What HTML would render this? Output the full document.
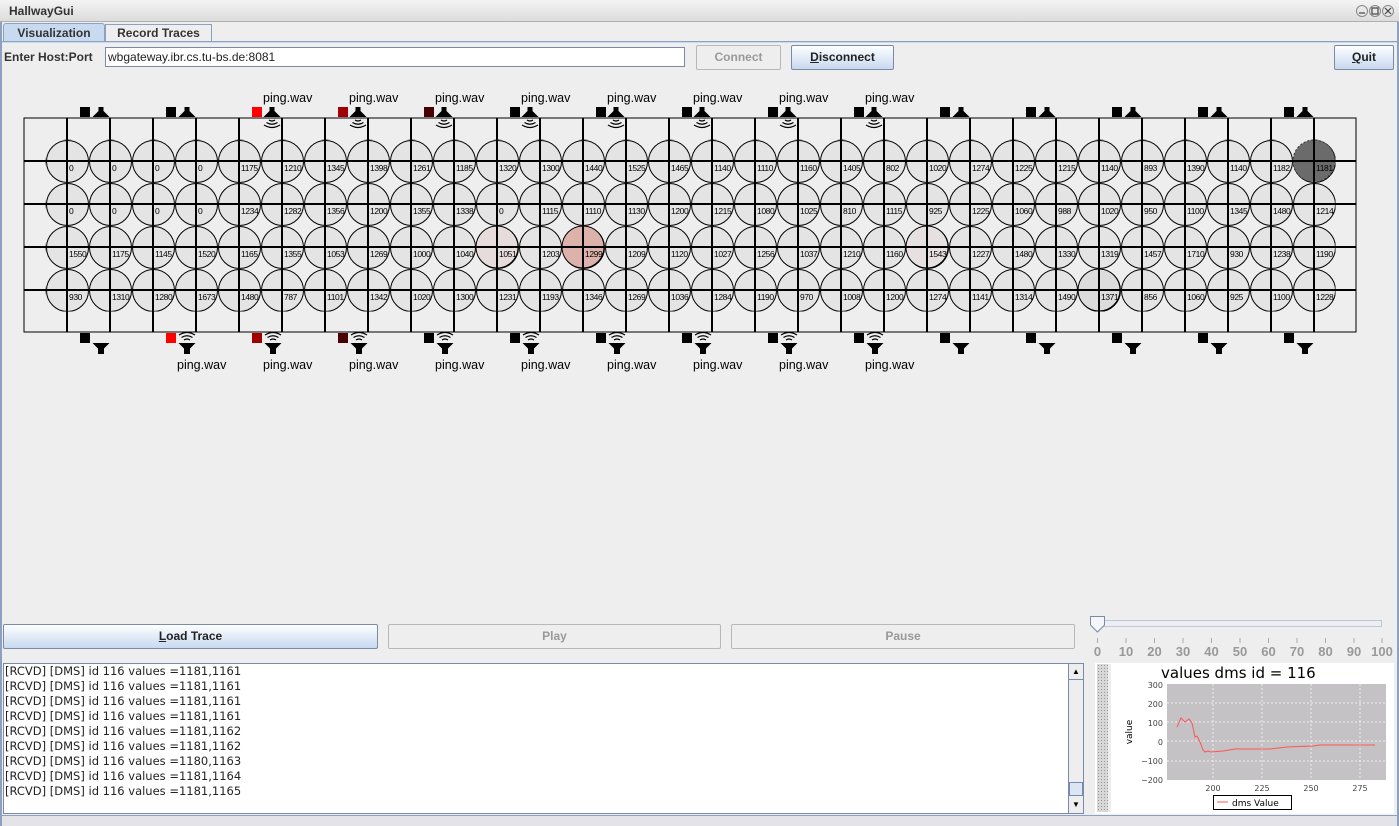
<!DOCTYPE html>
<html><head><meta charset="utf-8"><style>
*{margin:0;padding:0;box-sizing:border-box}
body{width:1399px;height:826px;background:#eeeeee;font-family:"Liberation Sans","DejaVu Sans",sans-serif;position:relative;overflow:hidden}
.a{position:absolute}
.btn{position:absolute;border:1px solid #7a8aa8;background:linear-gradient(#fdfeff,#dde8f6 60%,#c9d9ee);font-weight:bold;font-size:12px;text-align:center;color:#222;border-radius:2px}
.dis{border:1px solid #b8b8b8;background:#eeeeee;color:#999}
.log{font-family:"DejaVu Sans","Liberation Sans",sans-serif;font-size:11.5px;line-height:15px;color:#222}
</style></head><body>
<!-- title bar -->
<div class="a" style="left:0;top:0;width:1399px;height:22px;background:linear-gradient(#f4f4f4,#dcdcdc);border-bottom:1px solid #b0b0b0"></div>
<div class="a" style="left:9px;top:4px;font-size:12px;font-weight:bold;color:#333">HallwayGui</div>
<svg class="a" style="left:1355px;top:4px" width="44" height="14"><g fill="#e8e8e8" stroke="#888"><circle cx="7" cy="7" r="5.5"/><circle cx="20" cy="7" r="5.5"/><circle cx="33" cy="7" r="5.5"/></g><g stroke="#444" stroke-width="1.2"><line x1="4" y1="9" x2="10" y2="9"/><rect x="17" y="4" width="6" height="6" fill="none"/><line x1="30" y1="4" x2="36" y2="10"/><line x1="36" y1="4" x2="30" y2="10"/></g></svg>
<div class="a" style="left:0;top:22px;width:2px;height:804px;background:#8da0c0"></div>
<div class="a" style="left:1397px;top:22px;width:2px;height:804px;background:#8da0c0"></div>
<!-- tabs -->
<div class="a" style="left:3px;top:23px;width:102px;height:19px;background:#c8daf0;border:1px solid #8da0c0;border-bottom:none;border-radius:3px 3px 0 0;font-size:12px;font-weight:bold;color:#333;text-align:center;line-height:18px">Visualization</div>
<div class="a" style="left:105px;top:24px;width:107px;height:17px;background:#eeeeee;border:1px solid #8da0c0;border-bottom:none;font-size:12px;font-weight:bold;color:#333;text-align:center;line-height:17px">Record Traces</div>
<div class="a" style="left:2px;top:41px;width:1395px;height:2px;background:#c8daf0;border-top:1px solid #8da0c0"></div>
<!-- host row -->
<div class="a" style="left:4px;top:50px;font-size:12px;font-weight:bold;color:#333">Enter Host:Port</div>
<div class="a" style="left:105px;top:47px;width:580px;height:20px;background:#fff;border:1px solid #7a8aa8;font-size:12px;line-height:18px;padding-left:2px;color:#222">wbgateway.ibr.cs.tu-bs.de:8081</div>
<div class="btn dis" style="left:696px;top:45px;width:85px;height:25px;line-height:23px">Connect</div>
<div class="btn" style="left:791px;top:45px;width:103px;height:25px;line-height:23px"><u>D</u>isconnect</div>
<div class="btn" style="left:1334px;top:45px;width:60px;height:25px;line-height:23px"><u>Q</u>uit</div>
<!-- grid -->
<svg class="a" style="left:0;top:0" width="1399" height="380" font-family="Liberation Sans, sans-serif">
<defs><pattern id="c" x="46" y="140" width="43" height="43" patternUnits="userSpaceOnUse"><circle cx="21.5" cy="21.5" r="21" fill="#e4e4e4" stroke="#000" stroke-width="1"/></pattern>
<g id="st"><rect x="-2.5" y="0" width="5" height="5"/><path d="M-2.5 4 L2.5 4 L8.5 10 L-8.5 10Z"/></g>
<g id="sb"><path d="M-8.5 0 L8.5 0 L2.5 6 L-2.5 6Z"/><rect x="-3" y="5" width="6" height="6"/></g>
<g id="wt" fill="none" stroke="#000" stroke-width="1.2"><path d="M-3 2 Q0 4 3 2"/><path d="M-5.5 4.5 Q0 8 5.5 4.5"/><path d="M-8 7 Q0 12 8 7"/></g>
<g id="wb" fill="none" stroke="#000" stroke-width="1.2"><path d="M-3 7 Q0 5 3 7"/><path d="M-5.5 4.5 Q0 1 5.5 4.5"/><path d="M-8 2 Q0 -3 8 2"/></g></defs>
<rect x="24" y="118" width="1332" height="214" fill="#eeeeee" stroke="#000" stroke-width="1"/>
<rect x="45.5" y="139.5" width="1290" height="172" fill="url(#c)"/>
<circle cx="1314" cy="161" r="21" fill="#6b6b6b" stroke="#333" stroke-dasharray="2 2"/>
<circle cx="583" cy="247" r="21" fill="#dcb2ab" stroke="#000"/>
<circle cx="497" cy="247" r="21" fill="#e6dcdc" stroke="#000"/>
<circle cx="927" cy="247" r="21" fill="#e6e0e0" stroke="#000"/>
<circle cx="1099" cy="290" r="21" fill="#dcdcdc" stroke="#000"/>
<g stroke="#000" stroke-width="2">
<path d="M67 118V332M110 118V332M153 118V332M196 118V332M239 118V332M282 118V332M325 118V332M368 118V332M411 118V332M454 118V332M497 118V332M540 118V332M583 118V332M626 118V332M669 118V332M712 118V332M755 118V332M798 118V332M841 118V332M884 118V332M927 118V332M970 118V332M1013 118V332M1056 118V332M1099 118V332M1142 118V332M1185 118V332M1228 118V332M1271 118V332M1314 118V332"/>
<path d="M24 161H1356M24 204H1356M24 247H1356M24 290H1356"/>
</g>
<g font-size="8.5" letter-spacing="-0.4" fill="#000">
<text y="171"><tspan x="69">0</tspan><tspan x="112">0</tspan><tspan x="155">0</tspan><tspan x="198">0</tspan><tspan x="241">1175</tspan><tspan x="284">1210</tspan><tspan x="327">1345</tspan><tspan x="370">1398</tspan><tspan x="413">1261</tspan><tspan x="456">1185</tspan><tspan x="499">1320</tspan><tspan x="542">1300</tspan><tspan x="585">1440</tspan><tspan x="628">1525</tspan><tspan x="671">1465</tspan><tspan x="714">1140</tspan><tspan x="757">1110</tspan><tspan x="800">1160</tspan><tspan x="843">1405</tspan><tspan x="886">802</tspan><tspan x="929">1020</tspan><tspan x="972">1274</tspan><tspan x="1015">1225</tspan><tspan x="1058">1215</tspan><tspan x="1101">1140</tspan><tspan x="1144">893</tspan><tspan x="1187">1390</tspan><tspan x="1230">1140</tspan><tspan x="1273">1182</tspan><tspan x="1316">1181</tspan></text>
<text y="214"><tspan x="69">0</tspan><tspan x="112">0</tspan><tspan x="155">0</tspan><tspan x="198">0</tspan><tspan x="241">1234</tspan><tspan x="284">1282</tspan><tspan x="327">1356</tspan><tspan x="370">1200</tspan><tspan x="413">1355</tspan><tspan x="456">1338</tspan><tspan x="499">0</tspan><tspan x="542">1115</tspan><tspan x="585">1110</tspan><tspan x="628">1130</tspan><tspan x="671">1200</tspan><tspan x="714">1215</tspan><tspan x="757">1080</tspan><tspan x="800">1025</tspan><tspan x="843">810</tspan><tspan x="886">1115</tspan><tspan x="929">925</tspan><tspan x="972">1225</tspan><tspan x="1015">1060</tspan><tspan x="1058">988</tspan><tspan x="1101">1020</tspan><tspan x="1144">950</tspan><tspan x="1187">1100</tspan><tspan x="1230">1345</tspan><tspan x="1273">1480</tspan><tspan x="1316">1214</tspan></text>
<text y="257"><tspan x="69">1550</tspan><tspan x="112">1175</tspan><tspan x="155">1145</tspan><tspan x="198">1520</tspan><tspan x="241">1165</tspan><tspan x="284">1355</tspan><tspan x="327">1053</tspan><tspan x="370">1269</tspan><tspan x="413">1000</tspan><tspan x="456">1040</tspan><tspan x="499">1051</tspan><tspan x="542">1203</tspan><tspan x="585">1299</tspan><tspan x="628">1209</tspan><tspan x="671">1120</tspan><tspan x="714">1027</tspan><tspan x="757">1256</tspan><tspan x="800">1037</tspan><tspan x="843">1210</tspan><tspan x="886">1160</tspan><tspan x="929">1543</tspan><tspan x="972">1227</tspan><tspan x="1015">1480</tspan><tspan x="1058">1330</tspan><tspan x="1101">1319</tspan><tspan x="1144">1457</tspan><tspan x="1187">1710</tspan><tspan x="1230">930</tspan><tspan x="1273">1238</tspan><tspan x="1316">1190</tspan></text>
<text y="300"><tspan x="69">930</tspan><tspan x="112">1310</tspan><tspan x="155">1280</tspan><tspan x="198">1673</tspan><tspan x="241">1480</tspan><tspan x="284">787</tspan><tspan x="327">1101</tspan><tspan x="370">1342</tspan><tspan x="413">1020</tspan><tspan x="456">1300</tspan><tspan x="499">1231</tspan><tspan x="542">1193</tspan><tspan x="585">1346</tspan><tspan x="628">1269</tspan><tspan x="671">1036</tspan><tspan x="714">1284</tspan><tspan x="757">1190</tspan><tspan x="800">970</tspan><tspan x="843">1008</tspan><tspan x="886">1200</tspan><tspan x="929">1274</tspan><tspan x="972">1141</tspan><tspan x="1015">1314</tspan><tspan x="1058">1490</tspan><tspan x="1101">1371</tspan><tspan x="1144">856</tspan><tspan x="1187">1060</tspan><tspan x="1230">925</tspan><tspan x="1273">1100</tspan><tspan x="1316">1228</tspan></text>
</g>
<!-- top devices -->
<g fill="#000">
<rect x="80" y="107" width="10" height="10"/><use href="#st" x="101" y="107"/>
<rect x="166" y="107" width="10" height="10"/><use href="#st" x="187" y="107"/>
<rect x="252" y="107" width="10" height="10" fill="#ff0000"/><use href="#st" x="272" y="107"/><use href="#wt" x="272" y="118"/>
<rect x="338" y="107" width="10" height="10" fill="#a00000"/><use href="#st" x="358" y="107"/><use href="#wt" x="358" y="118"/>
<rect x="424" y="107" width="10" height="10" fill="#4a0000"/><use href="#st" x="444" y="107"/><use href="#wt" x="444" y="118"/>
<rect x="510" y="107" width="10" height="10"/><use href="#st" x="530" y="107"/><use href="#wt" x="530" y="118"/>
<rect x="596" y="107" width="10" height="10"/><use href="#st" x="616" y="107"/><use href="#wt" x="616" y="118"/>
<rect x="682" y="107" width="10" height="10"/><use href="#st" x="702" y="107"/><use href="#wt" x="702" y="118"/>
<rect x="768" y="107" width="10" height="10"/><use href="#st" x="788" y="107"/><use href="#wt" x="788" y="118"/>
<rect x="854" y="107" width="10" height="10"/><use href="#st" x="874" y="107"/><use href="#wt" x="874" y="118"/>
<rect x="940" y="107" width="10" height="10"/><use href="#st" x="961" y="107"/>
<rect x="1026" y="107" width="10" height="10"/><use href="#st" x="1047" y="107"/>
<rect x="1112" y="107" width="10" height="10"/><use href="#st" x="1133" y="107"/>
<rect x="1198" y="107" width="10" height="10"/><use href="#st" x="1219" y="107"/>
<rect x="1284" y="107" width="10" height="10"/><use href="#st" x="1305" y="107"/>
</g>
<g font-size="12.5" fill="#000"><text y="102"><tspan x="263">ping.wav</tspan><tspan x="349">ping.wav</tspan><tspan x="435">ping.wav</tspan><tspan x="521">ping.wav</tspan><tspan x="607">ping.wav</tspan><tspan x="693">ping.wav</tspan><tspan x="779">ping.wav</tspan><tspan x="865">ping.wav</tspan></text>
<text y="369"><tspan x="177">ping.wav</tspan><tspan x="263">ping.wav</tspan><tspan x="349">ping.wav</tspan><tspan x="435">ping.wav</tspan><tspan x="521">ping.wav</tspan><tspan x="607">ping.wav</tspan><tspan x="693">ping.wav</tspan><tspan x="779">ping.wav</tspan><tspan x="865">ping.wav</tspan></text></g>
<!-- bottom devices -->
<g fill="#000">
<rect x="80" y="333" width="10" height="10"/><use href="#sb" x="101" y="343"/>
<rect x="166" y="333" width="10" height="10" fill="#ff0000"/><use href="#sb" x="187" y="343"/><use href="#wb" x="187" y="333"/>
<rect x="252" y="333" width="10" height="10" fill="#a00000"/><use href="#sb" x="273" y="343"/><use href="#wb" x="273" y="333"/>
<rect x="338" y="333" width="10" height="10" fill="#4a0000"/><use href="#sb" x="359" y="343"/><use href="#wb" x="359" y="333"/>
<rect x="424" y="333" width="10" height="10"/><use href="#sb" x="445" y="343"/><use href="#wb" x="445" y="333"/>
<rect x="510" y="333" width="10" height="10"/><use href="#sb" x="531" y="343"/><use href="#wb" x="531" y="333"/>
<rect x="596" y="333" width="10" height="10"/><use href="#sb" x="617" y="343"/><use href="#wb" x="617" y="333"/>
<rect x="682" y="333" width="10" height="10"/><use href="#sb" x="703" y="343"/><use href="#wb" x="703" y="333"/>
<rect x="768" y="333" width="10" height="10"/><use href="#sb" x="789" y="343"/><use href="#wb" x="789" y="333"/>
<rect x="854" y="333" width="10" height="10"/><use href="#sb" x="875" y="343"/><use href="#wb" x="875" y="333"/>
<rect x="940" y="333" width="10" height="10"/><use href="#sb" x="961" y="343"/>
<rect x="1026" y="333" width="10" height="10"/><use href="#sb" x="1047" y="343"/>
<rect x="1112" y="333" width="10" height="10"/><use href="#sb" x="1133" y="343"/>
<rect x="1198" y="333" width="10" height="10"/><use href="#sb" x="1219" y="343"/>
<rect x="1284" y="333" width="10" height="10"/><use href="#sb" x="1305" y="343"/>
</g>
</svg>
<!-- bottom buttons -->
<div class="btn" style="left:3px;top:624px;width:375px;height:25px;line-height:23px"><u>L</u>oad Trace</div>
<div class="btn dis" style="left:388px;top:624px;width:333px;height:25px;line-height:23px">Play</div>
<div class="btn dis" style="left:731px;top:624px;width:344px;height:25px;line-height:23px">Pause</div>
<!-- slider -->
<svg class="a" style="left:1085px;top:612px" width="312" height="50" font-family="Liberation Sans, sans-serif">
<rect x="12.5" y="8.5" width="284" height="6" fill="#eeeeee" stroke="#b8c8e0"/>
<path d="M5.5 4.5 H19.5 V13 L12.5 20 L5.5 13Z" fill="#f4f6fa" stroke="#7a8aa8"/>
<g stroke="#aaa"><path d="M12.5 26V31M41 26V31M69.5 26V31M98 26V31M126.5 26V31M155 26V31M183.5 26V31M212 26V31M240.5 26V31M269 26V31M297 26V31"/></g>
<g font-size="13" font-weight="bold" fill="#999" text-anchor="middle"><text y="44"><tspan x="12.5">0</tspan><tspan x="41">10</tspan><tspan x="69.5">20</tspan><tspan x="98">30</tspan><tspan x="126.5">40</tspan><tspan x="155">50</tspan><tspan x="183.5">60</tspan><tspan x="212">70</tspan><tspan x="240.5">80</tspan><tspan x="269">90</tspan><tspan x="297">100</tspan></text></g>
</svg>
<!-- log -->
<div class="a" style="left:3px;top:663px;width:1081px;height:151px;background:#fff;border:1px solid #7a8aa8"></div>
<div class="a log" style="left:5px;top:664px">[RCVD] [DMS] id 116 values =1181,1161<br>[RCVD] [DMS] id 116 values =1181,1161<br>[RCVD] [DMS] id 116 values =1181,1161<br>[RCVD] [DMS] id 116 values =1181,1161<br>[RCVD] [DMS] id 116 values =1181,1162<br>[RCVD] [DMS] id 116 values =1181,1162<br>[RCVD] [DMS] id 116 values =1180,1163<br>[RCVD] [DMS] id 116 values =1181,1164<br>[RCVD] [DMS] id 116 values =1181,1165</div>
<div class="a" style="left:1068px;top:663px;width:16px;height:151px;background:#eeeeee;border:1px solid #7a8aa8"></div>
<div class="a" style="left:1069px;top:664px;width:14px;height:16px;border-bottom:1px solid #7a8aa8;font-size:8px;text-align:center;line-height:16px">▲</div>
<div class="a" style="left:1069px;top:782px;width:14px;height:14px;background:#dbe6f5;border:1px solid #7a8aa8"></div>
<div class="a" style="left:1069px;top:796px;width:14px;height:17px;font-size:8px;text-align:center;line-height:17px">▼</div>
<!-- chart -->
<div class="a" style="left:1095px;top:663px;width:299px;height:151px;background:#fff"></div>
<div class="a" style="left:1097px;top:664px;width:11px;height:148px;background:#d8d8d8;background-image:radial-gradient(#999 0.6px,transparent 0.8px);background-size:3px 3px"></div>
<div class="a" style="left:1108px;top:664px;width:3px;height:148px;background:#eeeeee"></div>
<svg class="a" style="left:1111px;top:663px" width="283" height="151" font-family="DejaVu Sans, sans-serif">
<text x="50" y="15" font-size="15" fill="#000">values dms id = 116</text>
<rect x="56" y="21" width="219" height="96" fill="#c4c2c4"/>
<g stroke="#fff" stroke-dasharray="2 2" stroke-width="0.7"><path d="M102 21V117M151 21V117M200 21V117M249 21V117M56 40H275M56 59H275M56 78H275M56 98H275"/></g>
<polyline fill="none" stroke="#ff5555" stroke-width="1" points="66,64 70,55 74,59 78,56 81,60 84,74 86,73 89,79 92,87 94,89 97,88 100,89 112,88 124,86 159,86 176,84 202,83 209,82 264,82"/>
<g font-size="8" fill="#444" text-anchor="end"><text x="52" y="25">300</text><text x="52" y="44">200</text><text x="52" y="63">100</text><text x="52" y="82">0</text><text x="52" y="101">−100</text><text x="52" y="120">−200</text></g>
<g font-size="8" fill="#444" text-anchor="middle"><text x="102" y="128">200</text><text x="151" y="128">225</text><text x="200" y="128">250</text><text x="249" y="128">275</text></g>
<text transform="translate(21,69) rotate(-90)" text-anchor="middle" font-size="9" fill="#000">value</text>
<rect x="102.5" y="132.5" width="78" height="14" fill="#fff" stroke="#000"/>
<line x1="106" y1="139" x2="117" y2="139" stroke="#ff5555"/>
<text x="121" y="143" font-size="9" fill="#000">dms Value</text>
</svg>
<div class="a" style="left:2px;top:815px;width:1395px;height:11px;background:#e4e4e8;border-top:1px solid #8da0c0"></div>
</body></html>
